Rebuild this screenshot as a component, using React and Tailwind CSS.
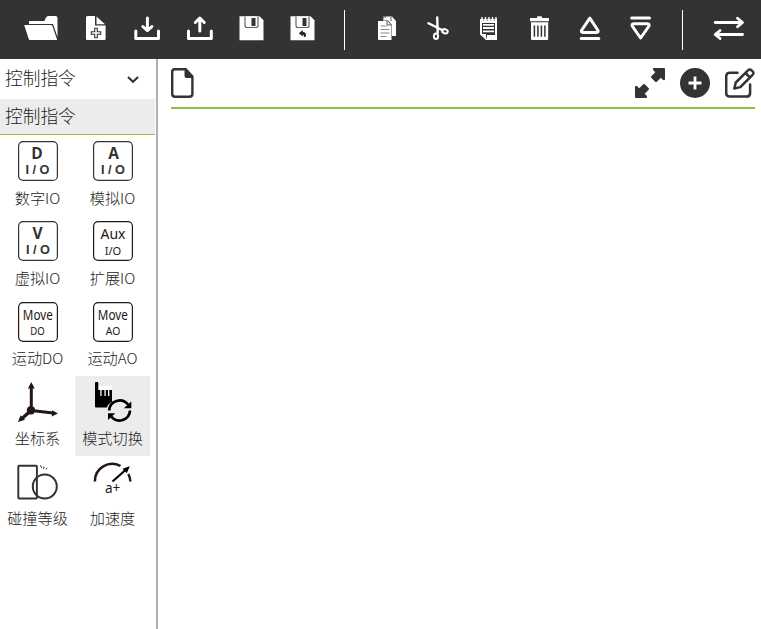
import React from 'react';

const FONT = "font-['Noto_Sans_CJK_SC','Noto_Sans',sans-serif]";

// Each toolbar glyph is drawn on a shared canvas; a cell shows its own slice of it.
function Cell({ x, w, children }) {
  return (
    <svg className="h-[59px] shrink-0" width={w} height="59" viewBox={`${x} 0 ${w} 59`} fill="#fff">
      {children}
    </svg>
  );
}

function Divider() {
  return <div className="h-10 w-px shrink-0 bg-white" />;
}

function Floppy({ x }) {
  return (
    <g>
      <path d={`M${x} 16.300h20l4 4v20h-24z`} />
      <path d={`M${x + 5.5} 16.500v9q0 2 2 2h9q2 0 2-2v-9`} fill="#fff" stroke="#666" strokeWidth="1.200" />
      <rect x={x + 12} y="18" width="4" height="8" fill="#333" />
    </g>
  );
}

function Toolbar() {
  return (
    <header className="flex h-[59px] w-full shrink-0 items-center bg-[#333]">
      <Cell x={0} w={71}>
        <path d="M29 24v-3h15.500q1.500-5 4-5h7q2 0 2 2v19L53 24z" />
        <path d="M24.200 25H51q1 0 1.500 1.200L57.200 40H30q-1 0-1.300-1z" />
      </Cell>
      <Cell x={71} w={50}>
        <path d="M87.500 16H95v9.500h10.600V39q0 1-1 1H87q-1 0-1-1V17.500q0-1.500 1.500-1.500z" />
        <path d="M96.500 16.500L105 24.300h-8.500z" />
        <path d="M94.700 28.300h2.600v3.400h3.400v2.600h-3.400v3.400h-2.600v-3.400h-3.400v-2.600h3.400z" fill="#fff" stroke="#333" strokeWidth="1.100" />
      </Cell>
      <Cell x={121} w={53}>
        <g fill="none" stroke="#fff" strokeWidth="3" strokeLinecap="round" strokeLinejoin="round">
          <path d="M147.400 18v12M142.800 26.500l4.600 4.200 4.600-4.200M135.800 31v7.500h22.700V31" />
        </g>
      </Cell>
      <Cell x={174} w={52}>
        <g fill="none" stroke="#fff" strokeWidth="3" strokeLinecap="round" strokeLinejoin="round">
          <path d="M199.800 19v12M195.300 22.500l4.500-4.500 4.500 4.500M188.500 31v7.500h22.800V31" />
        </g>
      </Cell>
      <Cell x={226} w={51}><Floppy x={239.500} /></Cell>
      <Cell x={277} w={67}>
        <Floppy x={290.500} />
        <path d="M298.800 33.200l4-3.200v2q4 .2 3 4.500l-2 .7q.7-2.500-1-2.700v2z" fill="#222" />
      </Cell>
      <Divider />
      <Cell x={345} w={67}>
        <path d="M383 16.500h9l4 4.500v15h-4V25l-4-4.500h-5z" />
        <path d="M378 21h9.500l4 4.500V40H379q-1 0-1-1z" />
        <path d="M380.500 26h6M380.500 29.500h9M380.500 33h9M380.500 36.500h6" stroke="#888" strokeWidth="1" />
        <path d="M387 21v4h4M383 20v-3h3M391 17v4" fill="none" stroke="#555" strokeWidth="1" />
      </Cell>
      <Cell x={412} w={51}>
        <g fill="none" stroke="#fff" strokeLinecap="round">
          <path d="M437.200 17.500l.5 15M428.500 23.200l14 7" strokeWidth="2.400" />
          <ellipse cx="436" cy="36.300" rx="2.100" ry="2.800" strokeWidth="2" />
          <ellipse cx="445" cy="31.300" rx="2.800" ry="2" transform="rotate(18 445 31.300)" strokeWidth="2" />
        </g>
      </Cell>
      <Cell x={463} w={51}>
        <path d="M480 19h17v21h-11l-6-5.500z" />
        <path d="M482 17v4M485.500 17v4M489 17v4M492.500 17v4M496 17v4" stroke="#fff" strokeWidth="1.400" />
        <path d="M483.800 18v3M487.300 18v3M490.800 18v3M494.300 18v3" stroke="#777" strokeWidth=".7" />
        <rect x="482" y="23" width="13" height="10.500" fill="#333" />
        <path d="M482 33h13v2h-8l-.5 4-4.500-4z" fill="#333" />
        <path d="M483 24.800h11M483 28h11M483 31.300h11" stroke="#fff" strokeWidth="1.800" />
        <path d="M480 34h6v6q-1-3-6-6M487 35h10v5h-10z" />
      </Cell>
      <Cell x={514} w={51}>
        <path d="M537 18v-1q0-.7 1-.7h3q1 0 1 .7v1h7v3.300h-19V18zM531 22.300h17.200V39q0 1-1 1H532q-1 0-1-1z" />
        <path d="M534.400 25.500v11.300M537.900 25.500v11.300M541.400 25.500v11.300M544.900 25.500v11.300" stroke="#333" strokeWidth="1.500" />
      </Cell>
      <Cell x={565} w={51}>
        <path d="M589.800 18.200L581.800 30q-1.300 2.500 1.200 2.500h13.500q2.500 0 1.200-2.500z" fill="none" stroke="#fff" strokeWidth="3" strokeLinejoin="round" />
        <path d="M581.200 38.400h17.600" stroke="#fff" strokeWidth="3" strokeLinecap="round" />
      </Cell>
      <Cell x={616} w={66}>
        <path d="M631.700 18h17.800" stroke="#fff" strokeWidth="3" strokeLinecap="round" />
        <path d="M640.600 38L632.500 26.500q-1.300-2.700 1.200-2.700h13.800q2.500 0 1.200 2.700z" fill="none" stroke="#fff" strokeWidth="3" strokeLinejoin="round" />
      </Cell>
      <Divider />
      <Cell x={683} w={78}>
        <path d="M715.200 22.500h27M737.500 18.200l5 4.300-5 4.300M742.500 34.500h-27M720 30.500l-4.800 4 4.800 4" fill="none" stroke="#fff" strokeWidth="2.800" strokeLinecap="round" strokeLinejoin="round" />
      </Cell>
    </header>
  );
}

const keyStyles = {
  bold: {
    tone: '#333',
    top: { y: 18, fontFamily: 'Open Sans', fontWeight: 700, fontSize: 15.5 },
    bottom: { y: 33, fontFamily: 'Liberation Sans', fontWeight: 700, fontSize: 13, textLength: 24 },
  },
  aux: {
    tone: '#231815',
    top: { y: 18, fontFamily: 'Noto Sans', fontSize: 14, textLength: 25 },
    bottom: { y: 33.5, fontFamily: 'Noto Sans', fontSize: 10, textLength: 16.5 },
  },
  move: {
    tone: '#231815',
    top: { y: 18, fontFamily: 'Noto Sans', fontSize: 13.5, textLength: 30 },
    bottom: { y: 33, fontFamily: 'Noto Sans', fontSize: 10, textLength: 14.5 },
  },
};

function KeyIcon({ top, bottom, variant, topX = 20, bottomX = 20 }) {
  const s = keyStyles[variant];
  return (
    <svg width="40" height="40" viewBox="0 0 40 40" fill={s.tone} textAnchor="middle" className={variant === 'move' ? 'translate-y-px' : ''}>
      <rect x=".6" y=".6" width="38.800" height="38.800" rx="4.500" fill="#fff" stroke={s.tone} strokeWidth="1.200" />
      <text x={topX} lengthAdjust="spacingAndGlyphs" {...s.top}>{top}</text>
      <text x={bottomX} lengthAdjust="spacingAndGlyphs" {...s.bottom}>{bottom}</text>
    </svg>
  );
}

function AxesIcon() {
  return (
    <svg className="translate-y-px" width="40" height="40" viewBox="0 0 40 40" fill="#231815" stroke="#231815">
      <path d="M13.300 28V5" strokeWidth="3" />
      <path d="M13.300 28.500L35 31" strokeWidth="2.800" />
      <path d="M13 28.500L4 36.500" strokeWidth="3.200" />
      <circle cx="13" cy="28.300" r="4.200" stroke="none" />
      <path d="M13.300 0l3.400 6.500h-6.800zM40 31.500l-6.200 3 .4-6.200zM0 40l2.500-6.700 4.500 4.500z" stroke="none" />
    </svg>
  );
}

function ModeIcon() {
  return (
    <svg className="overflow-visible" width="40" height="40" viewBox="0 0 40 40">
      <path d="M6 5h13v11H6z" fill="#fff" />
      <path d="M2 2q0-1 1-1h1.300q1 0 1 1v7h2v6h1.300V9h2.800v6h1.300V9h2.300v6h1.300V9H19v12q-4.500 2-5 5.500H3q-1 0-1-1z" fill="#000" />
      <g fill="none" stroke="#000" strokeWidth="2.700">
        <path d="M16.200 29.500A10.500 10.500 0 0 1 35 23.500M37 29.500A10.500 10.500 0 0 1 18.300 35.500" />
      </g>
      <path d="M38.300 20.500v6.800h-7.500zM15 39v-6.800h7.300z" fill="#000" />
    </svg>
  );
}

function CollisionIcon() {
  return (
    <svg width="41" height="40" viewBox="0 0 41 40" fill="none" stroke="#333">
      <rect x="1.300" y="4.800" width="18.600" height="32.700" rx=".8" strokeWidth="1.900" />
      <circle cx="27.800" cy="25.500" r="12" strokeWidth="2" />
      <path d="M23.500 4.300l1.200 2.500M27 5.500l-.4 2.500M30.200 6.800l-1.200 1.500" strokeWidth="1" />
    </svg>
  );
}

function AccelIcon() {
  return (
    <svg width="40" height="40" viewBox="0 0 40 40">
      <path d="M1.900 20.500A17.300 17.300 0 0 1 27.500 5M35.300 13Q37.200 16.500 37.400 20.500" fill="none" stroke="#231815" strokeWidth="2.500" />
      <path d="M19.500 20.500L32.500 9" stroke="#000" strokeWidth="2.200" />
      <path d="M36.800 5.200l-3 7-4.300-4.500z" fill="#000" />
      <text x="12" y="31.800" fontFamily="Noto Sans" fontSize="13.500" fill="#231815">a+</text>
    </svg>
  );
}

const commands = [
  { label: '数字IO', icon: <KeyIcon top="D" bottom="I / O" variant="bold" topX={19} bottomX={19.5} /> },
  { label: '模拟IO', icon: <KeyIcon top="A" bottom="I / O" variant="bold" topX={20.5} /> },
  { label: '虚拟IO', icon: <KeyIcon top="V" bottom="I / O" variant="bold" topX={19.5} /> },
  { label: '扩展IO', icon: <KeyIcon top="Aux" bottom="I/O" variant="aux" /> },
  { label: '运动DO', icon: <KeyIcon top="Move" bottom="DO" variant="move" topX={19.8} bottomX={19.5} /> },
  { label: '运动AO', icon: <KeyIcon top="Move" bottom="AO" variant="move" topX={19.8} /> },
  { label: '坐标系', icon: <AxesIcon /> },
  { label: '模式切换', icon: <ModeIcon />, active: true },
  { label: '碰撞等级', icon: <CollisionIcon /> },
  { label: '加速度', icon: <AccelIcon /> },
];

function Sidebar() {
  return (
    <aside className="w-[158px] shrink-0 border-r-2 border-[#b0b0b0] text-[#1c1c1c]">
      <div className="flex h-10 items-center justify-between pl-[5px] pr-[17px] text-[17.700px] font-light">
        <span className="pb-[3px]">控制指令</span>
        <svg width="12" height="10" viewBox="0 0 12 10" fill="none" stroke="#333" strokeWidth="2.100">
          <path d="M1 3l5 4.800L11 3" />
        </svg>
      </div>
      <div className="flex h-9 w-[155px] items-center border-b border-[#8fc13e] bg-[#ececec] pb-[3px] pl-[5px] text-[17.700px] font-light">
        控制指令
      </div>
      <div className="mt-px grid w-[150px] grid-cols-2">
        {commands.map((c) => (
          <div key={c.label} className={`flex h-20 flex-col items-center whitespace-nowrap pt-[5px] ${c.active ? 'bg-[#ececec]' : ''}`}>
            {c.icon}
            <span className="mt-1.5 text-[15.200px] font-light leading-[20px]">{c.label}</span>
          </div>
        ))}
      </div>
    </aside>
  );
}

function Workspace() {
  return (
    <main className="grow pl-[13px] pr-1.5">
      <div className="flex h-[50px] items-start border-b-2 border-[#8fc13e] pt-[9px]">
        <svg width="23" height="30" viewBox="0 0 23 30">
          <path d="M3.500 1.200h11.200l6.700 7.300v17.200q0 3-3 3H4q-2.800 0-2.800-3V4q0-2.800 2.300-2.800z" fill="none" stroke="#333" strokeWidth="2.400" />
          <path d="M13.500 1h2L22 8v2h-6.500q-2 0-2-2z" fill="#333" />
        </svg>
        <div className="ml-auto flex gap-[15px]">
          <svg width="30" height="30" viewBox="0 0 30 30" fill="#333">
            <path d="M18.500 0H29q1 0 1 1v10.500q-1.200 1.200-2.200.2l-2-2-4 4q-.8.800-1.600 0l-3.900-3.900q-.8-.8 0-1.600l4-4-2-2q-1-1 .2-2.200z" />
            <path d="M11.500 30H1q-1 0-1-1V18.500q1.200-1.200 2.200-.2l2 2 4-4q.8-.8 1.600 0l3.900 3.900q.8.800 0 1.600l-4 4 2 2q1 1-.2 2.200z" />
          </svg>
          <svg width="30" height="30" viewBox="0 0 30 30">
            <circle cx="15" cy="15" r="15" fill="#333" />
            <path d="M15 8.500v13M8.500 15h13" stroke="#fff" strokeWidth="2.800" />
          </svg>
          <svg width="30" height="30" viewBox="0 0 30 30" fill="none" stroke="#333" strokeWidth="2.500" strokeLinecap="round" strokeLinejoin="round">
            <path d="M12.500 4.700H4.800q-3.600 0-3.600 3.600v16.600q0 3.700 3.600 3.700h16.700q3.600 0 3.600-3.700v-8.500" />
            <path d="M9.300 20.500l1.500-6L23 2.300q1.700-1.800 3.600 0l1 1q1.800 1.700 0 3.500L15.300 19.100zM20.500 5l4.600 4.600" />
          </svg>
        </div>
      </div>
    </main>
  );
}

export default function App() {
  return (
    <div className={`flex h-screen w-full flex-col overflow-hidden bg-white text-[#333] ${FONT}`}>
      <Toolbar />
      <div className="flex min-h-0 grow">
        <Sidebar />
        <Workspace />
      </div>
    </div>
  );
}
